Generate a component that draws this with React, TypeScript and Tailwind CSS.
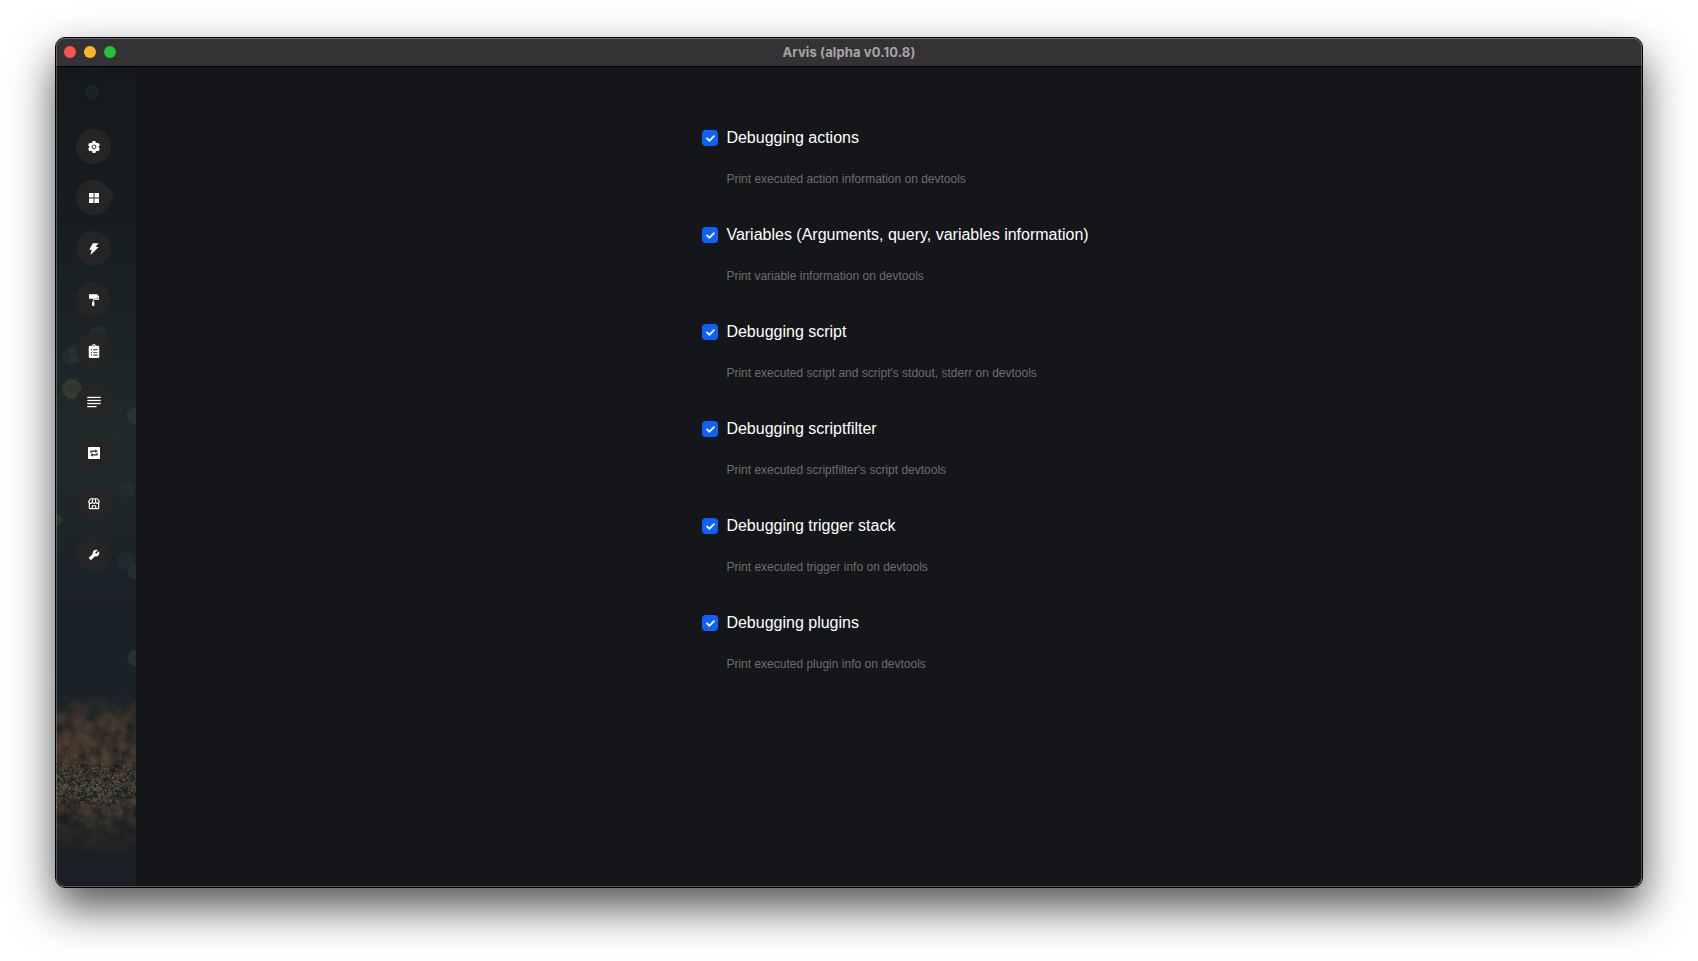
import type { ReactNode } from 'react';
import { AiFillAppstore, AiFillFormatPainter, AiFillSetting, AiFillThunderbolt, AiFillTool } from 'react-icons/ai';
import { FaCheck, FaClipboardList } from 'react-icons/fa';
import { GrTextAlignFull } from 'react-icons/gr';
import { BiStore } from 'react-icons/bi';

const options = [
  { title: 'Debugging actions', description: 'Print executed action information on devtools' },
  { title: 'Variables (Arguments, query, variables information)', description: 'Print variable information on devtools' },
  { title: 'Debugging script', description: "Print executed script and script's stdout, stderr on devtools" },
  { title: 'Debugging scriptfilter', description: "Print executed scriptfilter's script devtools" },
  { title: 'Debugging trigger stack', description: 'Print executed trigger info on devtools' },
  { title: 'Debugging plugins', description: 'Print executed plugin info on devtools' },
];

function UpdateIcon() {
  return (
    <svg width="14" height="14" viewBox="0 0 14 14" fill="none">
      <rect x="1" y="1" width="12" height="12" rx="0.8" fill="#fff" />
      <path d="M3.9 7.2V5.1h5M10.1 6.8v2.1h-5" stroke="#252525" strokeWidth="1.1" />
      <path d="M8.4 3.3v3.6l2.1-1.8zM5.6 7.1v3.6L3.5 8.9z" fill="#252525" />
    </svg>
  );
}

const navItems: { name: string; icon: ReactNode }[] = [
  { name: 'general', icon: <AiFillSetting size={14} /> },
  { name: 'workflows', icon: <AiFillAppstore size={14} /> },
  { name: 'plugins', icon: <AiFillThunderbolt size={14} /> },
  { name: 'theme', icon: <AiFillFormatPainter size={14} /> },
  { name: 'clipboard', icon: <FaClipboardList size={14} /> },
  { name: 'snippets', icon: <GrTextAlignFull size={14} /> },
  { name: 'update', icon: <UpdateIcon /> },
  { name: 'store', icon: <BiStore size={14} /> },
  { name: 'advanced', icon: <AiFillTool size={14} /> },
];

function createRandom(seed: number) {
  let s = seed;
  return () => {
    s = (s * 16807) % 2147483647;
    return s / 2147483647;
  };
}

const random = createRandom(4821);
const around = () => (random() + random() + random()) / 3;
const warm = ['#63493a', '#5a4436', '#56392f', '#56503a', '#1c2023', '#15191b'];
const bright = ['#66705a', '#596656', '#6f6a4c', '#44564f', '#11181b', '#0f1518', '#0f1518'];

const blotches = Array.from({ length: 360 }, () => ({
  x: random() * 80,
  y: 628 + random() * 160,
  r: 1.5 + random() * 3.5,
  fill: warm[Math.floor(random() * warm.length)],
}));
const clusters = Array.from({ length: 420 }, () => ({
  x: random() * 80,
  y: 668 + around() * 104,
  r: 0.8 + random() * 1.5,
  fill: warm[Math.floor(random() * warm.length)],
}));
const grains = Array.from({ length: 1300 }, () => ({
  x: random() * 80,
  y: 686 + around() * 62,
  r: 0.4 + random() * 0.5,
  fill: bright[Math.floor(random() * bright.length)],
}));

const bokeh = [
  { x: 36, y: 25, r: 6.5, fill: '#1d3438', o: 0.75 },
  { x: 37, y: 2, r: 5, fill: '#1a2a30', o: 0.35 },
  { x: 49, y: 128, r: 7, fill: '#263235', o: 0.8 },
  { x: 42, y: 267, r: 7, fill: '#354238', o: 0.5 },
  { x: 15, y: 289, r: 7, fill: '#35423e', o: 0.5 },
  { x: 22, y: 286, r: 8, fill: '#34423d', o: 0.5 },
  { x: 16, y: 322, r: 8.5, fill: '#4c4a38', o: 0.9 },
  { x: 79, y: 349, r: 7, fill: '#344640', o: 0.75 },
  { x: 55, y: 366, r: 9, fill: '#2a3936', o: 0.3 },
  { x: 71, y: 422, r: 7, fill: '#2e393a', o: 0.6 },
  { x: 0, y: 453, r: 5, fill: '#4a4a38', o: 0.7 },
  { x: 70, y: 494, r: 8, fill: '#2b3636', o: 0.6 },
  { x: 79, y: 505, r: 6, fill: '#343f38', o: 0.7 },
  { x: 80, y: 591, r: 7, fill: '#334446', o: 0.8 },
];

function SidebarBackdrop() {
  return (
    <svg className="absolute inset-0 h-full w-full" viewBox="0 0 80 820" preserveAspectRatio="none" aria-hidden="true">
      <defs>
        <linearGradient id="sky" x1="0" y1="0" x2="0" y2="1">
          <stop offset="0" stopColor="#15191c" />
          <stop offset="0.16" stopColor="#161c20" />
          <stop offset="0.3" stopColor="#1a2226" />
          <stop offset="0.45" stopColor="#1f292b" />
          <stop offset="0.57" stopColor="#1d2528" />
          <stop offset="0.68" stopColor="#1a2027" />
          <stop offset="0.77" stopColor="#1a2229" />
          <stop offset="0.82" stopColor="#2b2a27" />
          <stop offset="0.89" stopColor="#202324" />
          <stop offset="0.96" stopColor="#1b2025" />
          <stop offset="1" stopColor="#1b1f25" />
        </linearGradient>
        <linearGradient id="ground" x1="0" y1="0" x2="0" y2="1">
          <stop offset="0" stopColor="#3a3129" stopOpacity="0" />
          <stop offset="0.25" stopColor="#3a3129" stopOpacity="0.75" />
          <stop offset="0.5" stopColor="#302e29" stopOpacity="0.6" />
          <stop offset="1" stopColor="#2a2724" stopOpacity="0" />
        </linearGradient>
        <linearGradient id="fade" x1="0" y1="0" x2="0" y2="1">
          <stop offset="0" stopColor="#000" />
          <stop offset="0.2" stopColor="#fff" />
          <stop offset="0.65" stopColor="#fff" />
          <stop offset="1" stopColor="#000" />
        </linearGradient>
        <mask id="feather" maskUnits="userSpaceOnUse" x="0" y="625" width="80" height="165">
          <rect y="625" width="80" height="165" fill="url(#fade)" />
        </mask>
        <filter id="soft" x="-20%" y="-20%" width="140%" height="140%">
          <feGaussianBlur stdDeviation="2" />
        </filter>
        <filter id="fine">
          <feGaussianBlur stdDeviation="0.8" />
        </filter>
        <filter id="lens" x="-40%" y="-5%" width="180%" height="110%">
          <feGaussianBlur stdDeviation="0.8" />
        </filter>
      </defs>
      <rect width="80" height="820" fill="url(#sky)" />
      <g filter="url(#lens)">
        {bokeh.map((b, i) => (
          <circle key={i} cx={b.x} cy={b.y} r={b.r} fill={b.fill} fillOpacity={b.o * 0.5} stroke={b.fill} strokeOpacity={b.o} strokeWidth="1.4" />
        ))}
      </g>
      <rect y="630" width="80" height="160" fill="url(#ground)" />
      <g mask="url(#feather)">
        <g filter="url(#soft)" opacity="0.6">
          {blotches.map((b, i) => (
            <circle key={i} cx={b.x} cy={b.y} r={b.r} fill={b.fill} />
          ))}
        </g>
        <g filter="url(#fine)" opacity="0.6">
          {clusters.map((b, i) => (
            <circle key={i} cx={b.x} cy={b.y} r={b.r} fill={b.fill} />
          ))}
        </g>
        <g opacity="0.75">
          {grains.map((b, i) => (
            <circle key={i} cx={b.x} cy={b.y} r={b.r} fill={b.fill} />
          ))}
        </g>
      </g>
    </svg>
  );
}

function TitleBar() {
  return (
    <header className="grid h-[29px] shrink-0 grid-cols-[1fr_auto_1fr] items-center border-b border-black bg-[#353235] px-2">
      <div className="flex gap-2">
        <span className="size-3 rounded-full bg-[#ff544d]" />
        <span className="size-3 rounded-full bg-[#ffb429]" />
        <span className="size-3 rounded-full bg-[#24c138]" />
      </div>
      <h1 className="pb-px font-['Inter',sans-serif] text-[13px] leading-4 font-bold tracking-[0.12px] text-[#a7a4a7]">Arvis (alpha v0.10.8)</h1>
    </header>
  );
}

function Sidebar() {
  return (
    <nav className="relative w-20 shrink-0 overflow-hidden">
      <SidebarBackdrop />
      <ul className="relative flex flex-col gap-4 pt-[62px] pl-5">
        {navItems.map((item) => (
          <li key={item.name} className="flex size-[35px] items-center justify-center rounded-full bg-[#252525] text-white">
            {item.icon}
          </li>
        ))}
      </ul>
    </nav>
  );
}

function Option({ title, description }: { title: string; description: string }) {
  return (
    <div className="flex h-[97px] gap-[8.4px]">
      <span className="mt-0.5 flex size-4 shrink-0 items-center justify-center rounded bg-[#0d62fe] text-white">
        <FaCheck size={9} />
      </span>
      <div className="flex flex-col gap-[23px] whitespace-nowrap">
        <span className="text-base leading-5 text-white">{title}</span>
        <span className="text-xs leading-4 text-[#6c6d6f]">{description}</span>
      </div>
    </div>
  );
}

export default function App() {
  return (
    <div className="h-[961px] w-full overflow-hidden bg-white pt-[37px] pl-[55px] font-['Liberation_Sans',Arial,sans-serif]">
      <div className="h-[851px] w-[1588px] rounded-[10px] border border-black shadow-[0_20px_44px_rgba(0,0,0,0.67)]">
        <div className="relative flex h-full flex-col overflow-hidden rounded-[9px] bg-[#141619]">
          <TitleBar />
          <div className="flex min-h-0 flex-1">
            <Sidebar />
            <main className="flex-1 pt-[61px] pl-[566px]">
              {options.map((option) => (
                <Option key={option.title} {...option} />
              ))}
            </main>
          </div>
          <div className="pointer-events-none absolute inset-0 rounded-[9px] border border-white/25" />
        </div>
      </div>
    </div>
  );
}
